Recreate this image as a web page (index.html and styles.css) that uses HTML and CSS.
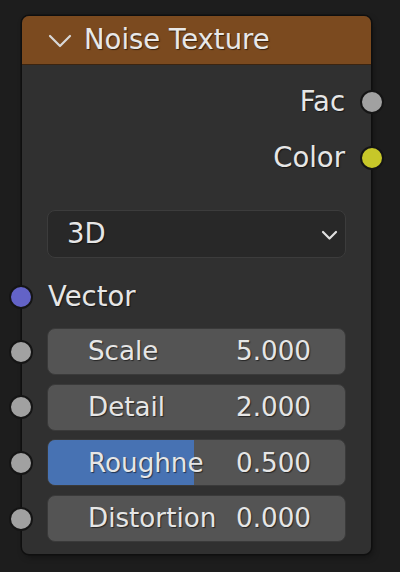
FILE: index.html
```html
<!DOCTYPE html>
<html>
<head>
<meta charset="utf-8">
<link rel="stylesheet" href="styles.css">
</head>
<body>
<div class="node">
  <div class="header">
    <svg class="hchev" width="24" height="14" viewBox="0 0 24 14"><path d="M2 2 L12 12 L22 2" fill="none" stroke="#d8d8d8" stroke-width="2.2" stroke-linecap="round" stroke-linejoin="round"/></svg>
    <span class="title">Noise Texture</span>
  </div>
  <div class="content">
    <div class="row out r-fac"><span class="lbl">Fac</span><span class="sock sock-r grey"></span></div>
    <div class="row out r-color"><span class="lbl">Color</span><span class="sock sock-r yellow"></span></div>
    <div class="row r-drop">
      <div class="drop"><span class="lbl">3D</span>
        <svg class="dchev" width="17" height="11" viewBox="0 0 17 11"><path d="M2 2 L8.5 8.5 L15 2" fill="none" stroke="#e0e0e0" stroke-width="2.2" stroke-linecap="round" stroke-linejoin="round"/></svg>
      </div>
    </div>
    <div class="row in r-vec"><span class="sock sock-l violet"></span><span class="lbl">Vector</span></div>
    <div class="sliders">
      <div class="row in"><span class="sock sock-l grey"></span><div class="slider"><span class="lbl">Scale</span><span class="val">5.000</span></div></div>
      <div class="row in"><span class="sock sock-l grey"></span><div class="slider"><span class="lbl">Detail</span><span class="val">2.000</span></div></div>
      <div class="row in"><span class="sock sock-l grey"></span><div class="slider"><span class="fill" style="width:49%"></span><span class="lbl">Roughne</span><span class="val">0.500</span></div></div>
      <div class="row in"><span class="sock sock-l grey"></span><div class="slider"><span class="lbl">Distortion</span><span class="val">0.000</span></div></div>
    </div>
  </div>
</div>
</body>
</html>
```
FILE: styles.css
```css
html, body {
  margin: 0;
  padding: 0;
  background: #1d1d1d;
  width: 400px;
  height: 572px;
  overflow: hidden;
  font-family: "DejaVu Sans", sans-serif;
  font-size: 27.5px;
  color: #e6e6e6;
}
.node {
  margin: 16px 0 0 22px;
  width: 349px;
  height: 538px;
  box-sizing: border-box;
  background: #303030;
  border-radius: 7px;
  box-shadow: 0 0 0 1.5px #0f0f0f, 2px 3px 6px rgba(0,0,0,0.35);
  position: relative;
}
.header {
  height: 49px;
  background: #7b4a1f;
  border-radius: 7px 7px 0 0;
  border-bottom: 1px solid #3b2410;
  display: flex;
  align-items: center;
  padding-left: 26px;
  box-sizing: border-box;
}
.hchev { margin-right: 12px; margin-top: 1px; flex: none; }
.title, .lbl, .val { text-shadow: 1px 1px 1px rgba(0,0,0,0.55); line-height: 1; }
.title { color: #e8e8e8; }
.content {
  display: flex;
  flex-direction: column;
  padding: 14px 0 12px;
}
.row {
  position: relative;
  display: flex;
  align-items: center;
  height: 46px;
  padding: 0 25px;
}
.row.out { justify-content: flex-end; padding-right: 26px; }
.r-color { margin-top: 10px; }
.r-drop { height: 48px; margin-top: 29px; }
.r-vec { margin-top: 16px; }
.sliders {
  display: flex;
  flex-direction: column;
  gap: 8.7px;
  margin-top: 8px;
}
.sliders .row { height: 47px; }
.sock {
  position: absolute;
  top: 50%;
  width: 20px;
  height: 20px;
  border-radius: 50%;
  border: 2px solid #151515;
  transform: translateY(-50%);
}
.sock-r { right: -13px; }
.sock-l { left: -13px; }
.grey { background: #a1a1a1; }
.yellow { background: #c7c729; }
.violet { background: #6363c7; }
.drop {
  flex: 1;
  height: 48px;
  box-sizing: border-box;
  background: #282828;
  border: 1.5px solid #3c3c3c;
  border-radius: 8px;
  display: flex;
  align-items: center;
  justify-content: space-between;
  padding: 0 7px 0 19px;
}
.dchev { flex: none; margin-top: 2px; }
.slider {
  flex: 1;
  height: 47px;
  box-sizing: border-box;
  background: #545454;
  border: 1.5px solid #3a3a3a;
  border-radius: 8px;
  display: flex;
  align-items: center;
  justify-content: space-between;
  padding: 0 34px 0 40px;
  position: relative;
  overflow: hidden;
  font-size: 26.2px;
}
.fill {
  position: absolute;
  left: 0;
  top: 0;
  bottom: 0;
  background: #4772b3;
}
.slider .lbl, .slider .val { position: relative; }
.r-vec .lbl { margin-left: 1px; }
```
